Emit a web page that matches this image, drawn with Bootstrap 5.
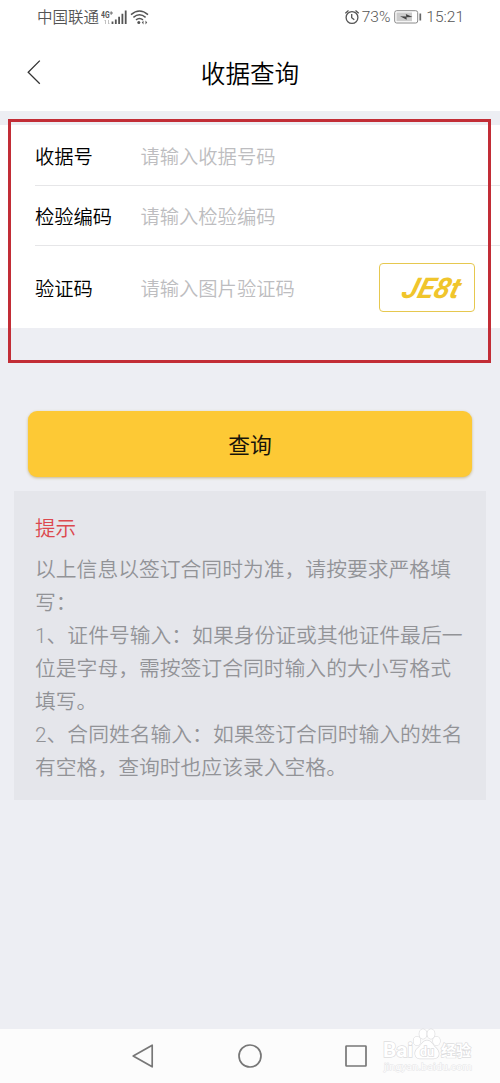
<!DOCTYPE html>
<html lang="zh-CN">
<head>
<meta charset="utf-8">
<meta name="viewport" content="width=device-width, initial-scale=1">
<title>收据查询</title>
<link href="https://cdn.jsdelivr.net/npm/bootstrap@5.3.0/dist/css/bootstrap.min.css" rel="stylesheet">
<style>
body{font-family:Roboto,"Noto Sans CJK SC",sans-serif;background:#edeef3;color:#111;line-height:1;overflow:hidden}
.screen{height:1083px}
.status{height:34px;padding:0 36px 0 37px;color:#555;font-size:15.5px;font-weight:350}
.carrier{padding-top:3px}
.clock,.pct{padding-top:2px}
.status svg{display:block}
.signal{margin-left:2px}
.titlebar{height:77px}
.titlebar h1{font-size:24.6px;color:#000;padding-top:4px;font-weight:350}
.back-btn{left:27px;top:26px}
.form-area{margin-top:14px;height:203px}
.field{margin-left:35px;font-size:19.3px;height:61px;border-bottom:1px solid #e6e6e8;padding-top:5px}
.field.second{height:60px}
.field.last-field{height:82px;border:0;padding:0 25px 0 0}
.last-field .field-label,.last-field .hint{padding-top:5px}
.field-label{width:105.500px;color:#000;font-weight:350}
.hint{color:#bdbdc0;font-weight:350}
.captcha{width:96px;height:49px;border:1.5px solid #e6c84f;border-radius:4px}
.highlight{left:8px;top:119px;width:483px;height:244px;border:3px solid #c22d36}
.query-btn{margin:83px 28px 0;height:66px;border-radius:9px;background:#fdc935;font-size:21.8px;color:#17140a;box-shadow:0 1px 3px #c9b98a;font-weight:400}
.query-btn span{position:relative;top:2px}
.tips{margin:14px 14px 0;height:309px;background:#e5e6eb;padding:27px 20px 0 21px}
.tips h2{font-size:20.6px;color:#dc484e;margin:0 0 14px;line-height:22px;font-weight:350}
.tips p{font-size:20.8px;line-height:32.95px;color:#929397;font-weight:350;margin:0;white-space:nowrap}
.sysnav{height:54px;background:#fcfcfc}
.watermark{right:24px;bottom:6px}
</style>
</head>
<body>
<div class="screen d-flex flex-column position-relative">
  <div class="status bg-white d-flex align-items-center flex-shrink-0">
    <span class="carrier">中国联通</span>
    <svg class="signal" width="50" height="22" viewBox="0 0 50 22">
      <text x="0" y="12" font-size="8.5" font-weight="700" fill="#555" textLength="8.500" lengthAdjust="spacingAndGlyphs">4G</text>
      <path d="M8.5 7h3.5M10.2 5.3v3.5" stroke="#666" stroke-width=".9"/>
      <path d="M4.500 18v-4l-1 1M7.500 14v4l1-1" stroke="#bbb" stroke-width=".9" fill="none"/>
      <path d="M11.500 15.500v2.500M14.800 13.500v4.500M18.100 10.700v7.300M21.400 7.700v10.300M24.700 4.500v13.500" stroke="#555" stroke-width="1.800"/>
      <path d="M30 8.600q8.500-7.300 17 0M32.400 11.300q6.100-5 12.200 0M35 13.900q3.500-2.800 7 0" fill="none" stroke="#555" stroke-width="1.500"/>
      <circle cx="37.800" cy="16.500" r="1.500" fill="#555"/>
      <path d="M42.500 14.500v4l-1.700-2zM44.500 14.500v4l1.700-2z" fill="#555"/>
    </svg>
    <svg class="ms-auto" width="17" height="18" viewBox="0 0 17 18">
      <circle cx="7" cy="9.500" r="5.900" fill="none" stroke="#555" stroke-width="1.300"/>
      <path d="M.300 5.300l3.200-2.900M13.700 5.300l-3.200-2.900M6.700 6v3.700l2.600 2" fill="none" stroke="#555" stroke-width="1.300"/>
    </svg>
    <span class="pct">73%</span>
    <svg class="mx-1" width="28" height="14" viewBox="0 0 28 14">
      <rect x=".7" y=".7" width="23" height="12.300" rx="2" fill="#fff" stroke="#888"/>
      <rect x="2.500" y="2.500" width="15.500" height="8.700" fill="#ccc"/>
      <path d="M6 6.200l6.300.2-.5-2.500 6.700 3.200-6 .2.200 2.500z" fill="#444"/>
      <path d="M26.300 3.500v7" stroke="#666" stroke-width="1.700"/>
    </svg>
    <span class="clock">15:21</span>
  </div>
  <header class="titlebar bg-white d-flex align-items-center justify-content-center position-relative flex-shrink-0">
    <svg class="back-btn position-absolute" width="14" height="25" viewBox="0 0 14 25"><path d="M12.800.600L1.200 12.300l11.600 11.400" fill="none" stroke="#333" stroke-width="1.300"/></svg>
    <h1 class="m-0">收据查询</h1>
  </header>
  <main class="flex-grow-1">
    <section class="form-area bg-white">
      <div class="field d-flex align-items-center"><span class="field-label">收据号</span><span class="hint">请输入收据号码</span></div>
      <div class="field second d-flex align-items-center"><span class="field-label">检验编码</span><span class="hint">请输入检验编码</span></div>
      <div class="field last-field d-flex align-items-center">
        <span class="field-label">验证码</span><span class="hint">请输入图片验证码</span>
        <div class="captcha ms-auto">
          <svg class="d-block" width="93" height="46" viewBox="0 0 93 46"><text transform="translate(20.500 33.500) skewX(-16)" textLength="57" lengthAdjust="spacingAndGlyphs" font-size="28.500" font-weight="700" font-style="italic" fill="#f0c52c">JE8t</text></svg>
        </div>
      </div>
    </section>
    <div class="d-grid"><button class="btn query-btn border-0 p-0" type="button"><span>查询</span></button></div>
    <section class="tips">
      <h2>提示</h2>
      <p>以上信息以签订合同时为准，请按要求严格填<br>写：<br>1、证件号输入：如果身份证或其他证件最后一<br>位是字母，需按签订合同时输入的大小写格式<br>填写。<br>2、合同姓名输入：如果签订合同时输入的姓名<br>有空格，查询时也应该录入空格。</p>
    </section>
  </main>
  <div class="highlight position-absolute"></div>
  <nav class="sysnav d-flex align-items-center justify-content-center flex-shrink-0">
    <svg width="240" height="28" viewBox="0 0 240 28" fill="none" stroke="#777" stroke-width="1.700" stroke-linejoin="round">
      <path d="M22.200 3.200v21.600L3.200 14z"/><circle cx="120" cy="14" r="11"/><rect x="216" y="4" width="20" height="20" rx=".5"/>
    </svg>
  </nav>
  <svg class="watermark position-absolute" width="96" height="57" viewBox="0 0 96 57" fill="#fff" stroke="#dcdcde" stroke-width="1.300" paint-order="stroke">
    <ellipse cx="37" cy="21" rx="3.500" ry="4.200"/><ellipse cx="43" cy="14" rx="3.700" ry="4.800"/><ellipse cx="51" cy="14" rx="3.700" ry="4.800"/><ellipse cx="56.500" cy="21" rx="3.500" ry="4.200"/>
    <path d="M47 20.500c-4 0-5 4-9 7.500-5 4-3 11 2.500 10.500h13c6 0 7-6 2.500-10.500-4-3.500-4.500-7.500-9-7.500z"/>
    <text x="3" y="37" font-size="20" font-weight="700" textLength="30" lengthAdjust="spacingAndGlyphs">Bai</text>
    <text x="40" y="35.500" font-size="12" font-weight="700" textLength="14" lengthAdjust="spacingAndGlyphs">du</text>
    <text x="61" y="36" font-size="15" font-weight="700">经验</text>
    <text x="4" y="49.500" font-size="9" stroke-width=".8" textLength="88" lengthAdjust="spacingAndGlyphs" stroke="#e3e3e5">jingyan.baidu.com</text>
  </svg>
</div>
<script src="https://cdn.jsdelivr.net/npm/bootstrap@5.3.0/dist/js/bootstrap.bundle.min.js"></script>
</body>
</html>
